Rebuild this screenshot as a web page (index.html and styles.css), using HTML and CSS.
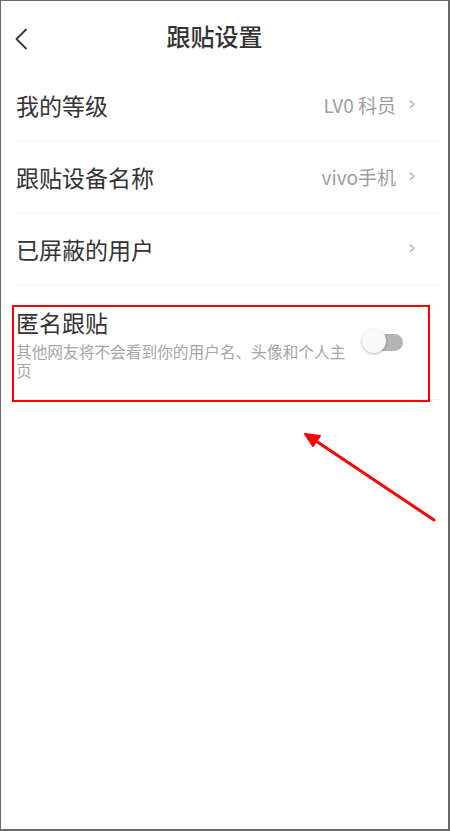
FILE: index.html
```html
<!DOCTYPE html>
<html lang="zh-CN">
<head>
<meta charset="utf-8">
<link rel="stylesheet" href="styles.css">
</head>
<body>
<div class="screen">
  <header class="header">
    <svg class="back" width="14" height="22" viewBox="0 0 14 22"><path d="M12 1.5 L2.5 11 L12 20.5" fill="none" stroke="#333" stroke-width="1.8" stroke-linecap="round" stroke-linejoin="round"/></svg>
    <h1 class="title">跟贴设置</h1>
  </header>
  <ul class="list">
    <li class="row">
      <span class="label">我的等级</span>
      <span class="value">LV0 科员</span>
      <span class="chev">›</span>
    </li>
    <li class="row">
      <span class="label">跟贴设备名称</span>
      <span class="value">vivo手机</span>
      <span class="chev">›</span>
    </li>
    <li class="row">
      <span class="label">已屏蔽的用户</span>
      <span class="value"></span>
      <span class="chev">›</span>
    </li>
    <li class="anon">
      <div class="anon-text">
        <div class="label">匿名跟贴</div>
        <div class="desc">其他网友将不会看到你的用户名、头像和个人主页</div>
      </div>
      <div class="toggle"><span class="track"></span><span class="knob"></span></div>
    </li>
  </ul>
  <div class="mark-box"></div>
  <svg class="mark-arrow" width="450" height="831" viewBox="0 0 450 831">
    <line x1="434" y1="520" x2="316" y2="441" stroke="#ff0000" stroke-width="3" stroke-linecap="round"/>
    <polygon points="305,434 320,436 313,446" fill="#ff0000" stroke="#ff0000" stroke-width="2" stroke-linejoin="round"/>
  </svg>
</div>
</body>
</html>
```
FILE: styles.css
```css
html, body {
  margin: 0;
  padding: 0;
  background: #fff;
}
.screen {
  position: relative;
  width: 450px;
  height: 831px;
  box-sizing: border-box;
  border-style: solid;
  border-color: #6a6a6a;
  border-width: 1px 2px 2px 1px;
  background: #fff;
  overflow: hidden;
  font-family: "Noto Sans CJK SC", "Noto Sans", sans-serif;
  color: #333;
}
.header {
  position: relative;
  height: 68px;
  display: flex;
  align-items: center;
  justify-content: center;
  padding-right: 20px;
}
.back {
  position: absolute;
  left: 13px;
  top: 27px;
}
.title {
  margin: 0;
  font-size: 24px;
  font-weight: 500;
  line-height: 30px;
  color: #333;
  padding-top: 1px;
}
.list {
  list-style: none;
  margin: 0 8px 0 15px;
  padding: 0;
}
.row {
  height: 71px;
  border-bottom: 1px solid #f0f0f0;
  display: flex;
  align-items: center;
}
.label {
  font-size: 23px;
  line-height: 30px;
  color: #333;
  flex: 1;
}
.value {
  font-size: 19px;
  color: #9e9e9e;
  margin-right: 12px;
}
.chev {
  font-family: "DejaVu Sans", sans-serif;
  font-size: 20px;
  color: #b8b8b8;
  margin-right: 24px;
  line-height: 20px;
  padding-bottom: 3px;
}
.anon {
  display: flex;
  align-items: flex-start;
  padding: 22px 0 19px 0;
  border-bottom: 1px solid #f0f0f0;
}
.anon-text {
  width: 340px;
}
.anon .label {
  display: block;
}
.desc {
  margin-top: 5px;
  font-size: 15.7px;
  line-height: 19px;
  color: #a6a6a6;
  width: 335px;
}
.toggle {
  position: relative;
  width: 42px;
  height: 26px;
  margin-top: 22px;
  margin-left: 6px;
}
.track {
  position: absolute;
  left: 12px;
  top: 5px;
  width: 29px;
  height: 17px;
  border-radius: 9px;
  background: #b4b4b4;
}
.knob {
  position: absolute;
  left: 0;
  top: 0;
  width: 24px;
  height: 24px;
  border-radius: 50%;
  background: #f9f9f9;
  box-shadow: 0 1px 3px rgba(0,0,0,0.3);
}
.mark-box {
  position: absolute;
  left: 11px;
  top: 304px;
  width: 418px;
  height: 97px;
  box-sizing: border-box;
  border: 2px solid #ff0000;
}
.mark-arrow {
  position: absolute;
  left: -1px;
  top: -1px;
}
```
